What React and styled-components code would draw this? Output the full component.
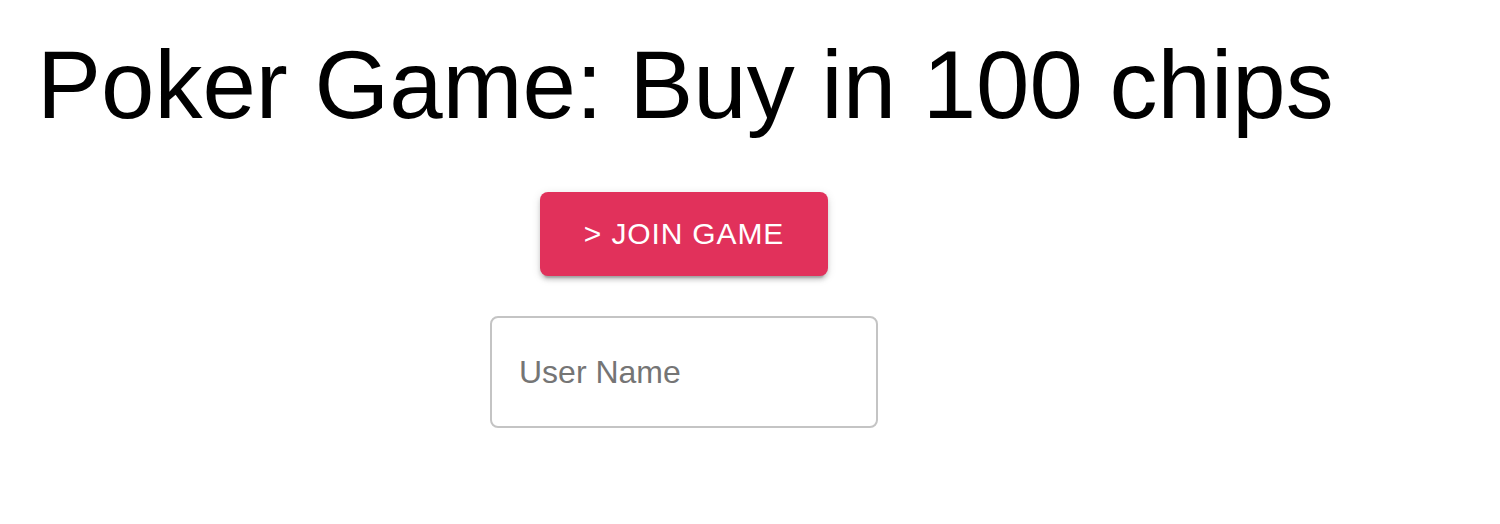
import React from "react";
import styled, { createGlobalStyle } from "styled-components";

const GlobalStyle = createGlobalStyle`
  html, body { margin: 0; padding: 0; background: #ffffff; }
  body { font-family: "Liberation Sans", Arial, Helvetica, sans-serif; }
`;

const Page = styled.div`
  display: flex;
  flex-direction: column;
  width: 1368px;
  padding-top: 30px;
`;

const Title = styled.h1`
  margin: 0;
  padding-left: 37px;
  font-family: "Liberation Sans", Arial, sans-serif;
  font-weight: 400;
  font-size: 96px;
  line-height: 110px;
  color: #000000;
  white-space: nowrap;
`;

const Form = styled.div`
  display: flex;
  flex-direction: column;
  align-items: center;
  gap: 40px;
  margin-top: 52px;
`;

const JoinButton = styled.button`
  box-sizing: border-box;
  height: 84px;
  padding: 0 44px;
  border: 0;
  border-radius: 8px;
  background: #e1315b;
  color: #ffffff;
  font-family: "Liberation Sans", Arial, sans-serif;
  font-size: 30px;
  font-weight: 400;
  letter-spacing: 0.02857em;
  text-transform: uppercase;
  line-height: 1;
  cursor: pointer;
  box-shadow: 0px 6px 2px -4px rgba(0, 0, 0, 0.2),
    0px 4px 4px 0px rgba(0, 0, 0, 0.14),
    0px 2px 10px 0px rgba(0, 0, 0, 0.12);
`;

const Field = styled.input`
  box-sizing: border-box;
  width: 388px;
  height: 112px;
  padding: 0 27px;
  border: 2px solid #c4c4c4;
  border-radius: 8px;
  outline: none;
  font-family: "Liberation Sans", Arial, sans-serif;
  font-size: 32px;
  color: rgba(0, 0, 0, 0.87);
  background: #ffffff;

  &::placeholder {
    color: #757575;
    opacity: 1;
  }
`;

export default function App() {
  return (
    <>
      <GlobalStyle />
      <Page>
        <Title>Poker Game: Buy in 100 chips</Title>
        <Form>
          <JoinButton type="button">&gt; Join Game</JoinButton>
          <Field type="text" placeholder="User Name" />
        </Form>
      </Page>
    </>
  );
}
